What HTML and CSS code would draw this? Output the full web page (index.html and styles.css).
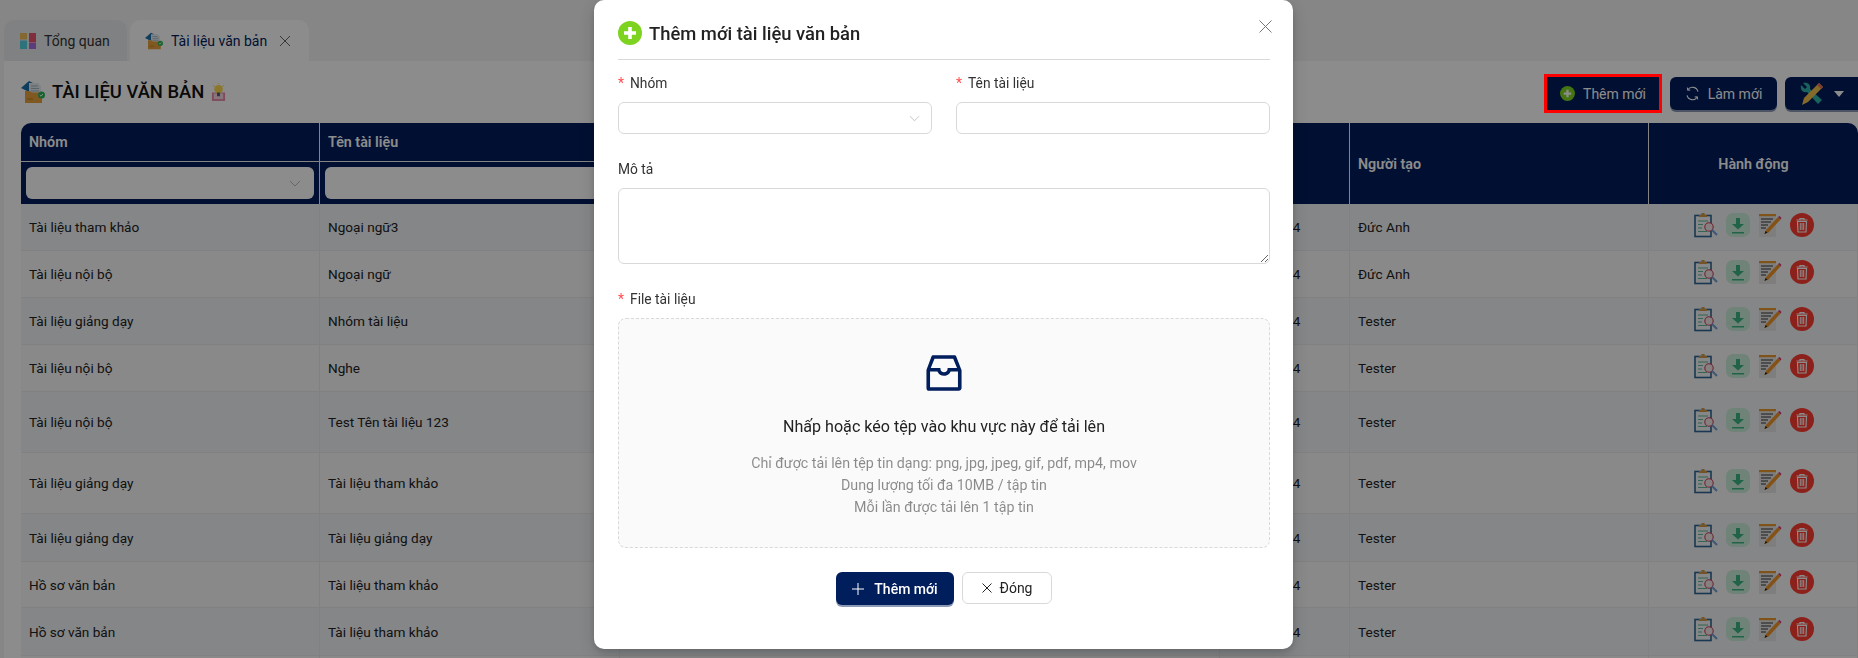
FILE: index.html
```html
<!DOCTYPE html>
<html lang="vi">
<head>
<meta charset="utf-8">
<title>Tài liệu văn bản</title>
<link rel="stylesheet" href="styles.css">
</head>
<body>
<svg class="sprite" aria-hidden="true">
  <symbol id="folder" viewBox="0 0 24 24">
    <path d="M0 8 8 1l4 2v8H6z" fill="#1f6fa8"/>
    <path d="M8 3h9l3 3v9H8z" fill="#e6edf2"/>
    <path d="M10 6h7M10 8.5h8M10 11h8" stroke="#9fb2bf" stroke-width="1"/>
    <path d="M4 11h5l1.500 1.500H21V23H4z" fill="#e8a33d"/>
    <path d="M6 19h6" stroke="#b87b22" stroke-width="1"/>
    <circle cx="20.500" cy="15" r="3.500" fill="#2fb457"/>
    <path d="m18.800 15 1.200 1.200 2-2.200" fill="none" stroke="#fff" stroke-width="1"/>
  </symbol>
  <symbol id="bulb" viewBox="0 0 16 20">
    <path d="M1 10h14v9H1z" fill="#e98aa8"/>
    <path d="M3 11h10v6H3z" fill="#f6d7e0"/>
    <circle cx="8" cy="6.500" r="4.500" fill="#ffd84d"/>
    <path d="M6.500 10h3v4h-3z" fill="#4a5a70"/>
    <path d="M2 2l2 2M14 2l-2 2M8 0v1" stroke="#ffd84d" stroke-width="1"/>
  </symbol>
  <symbol id="plus-circle" viewBox="0 0 24 24">
    <circle cx="12" cy="12" r="12" fill="#7ed321"/>
    <path d="M12 6v12M6 12h12" stroke="#fff" stroke-width="3.600"/>
  </symbol>
  <symbol id="view" viewBox="0 0 24 26">
    <rect x="1" y="3.500" width="16" height="21" fill="#f2f6f8" stroke="#2f6593" stroke-width="1.600"/>
    <path d="M5 5V3h2.500V1h3v2H13v2z" fill="#d39a45"/>
    <path d="M4 9h10M4 12.500h5M4 16h4M4 19.500h9" stroke="#62b892" stroke-width="1.200"/>
    <circle cx="15" cy="15" r="4.200" fill="#f7eaea" stroke="#c8415a" stroke-width="1.100"/>
    <path d="m18 18 5 5" stroke="#6f9fd6" stroke-width="2"/>
  </symbol>
  <symbol id="download" viewBox="0 0 24 24">
    <rect width="24" height="24" rx="7" fill="#cdeedd"/>
    <path d="M10 5h4v6h4l-6 5.500L6 11h4zM6 19h12v1.600H6z" fill="#3bb583"/>
  </symbol>
  <symbol id="edit" viewBox="0 0 24 24">
    <path d="M1 1h17v23H1z" fill="#e6e6e6"/>
    <path d="M1 1h17v2.200H1z" fill="#ea9a2e"/>
    <path d="M3 6h12M3 9h10M3 12h7M3 15h5" stroke="#333" stroke-width="1.200"/>
    <path d="M20 4 22.500 6.500l-12 13-4 1.500L8 17z" fill="#f0952a"/>
    <path d="m20 4 2.500 2.500 1-1.500L21.500 3z" fill="#e0327e"/>
    <path d="m6.500 21 1-3 2 1.500z" fill="#222"/>
  </symbol>
  <symbol id="trash" viewBox="0 0 24 24">
    <circle cx="12" cy="12" r="12" fill="#ff3b30"/>
    <path d="M6.500 7h11M10 7V5.500h4V7" fill="none" stroke="#fff" stroke-width="1.200"/>
    <path d="M7.500 8.500h9L16 19H8z" fill="none" stroke="#fff" stroke-width="1.200"/>
    <path d="M10.300 10v7M12 10v7M13.700 10v7" stroke="#fff" stroke-width="1"/>
  </symbol>
</svg>

<div class="tabs">
  <div class="tab">
    <svg class="tab-icon" viewBox="0 0 16 16" width="16" height="16">
      <rect width="7" height="6.500" fill="#f0bd5b"/>
      <rect x="9" width="7" height="9.500" fill="#ea5272"/>
      <rect y="7.500" width="7" height="8.500" fill="#55cfe0"/>
      <rect x="9" y="10" width="7" height="6" fill="#a76fe0"/>
    </svg>
    <span>Tổng quan</span>
  </div>
  <div class="tab tab-active">
    <svg class="tab-icon-doc" width="18" height="18"><use href="#folder"/></svg>
    <span>Tài liệu văn bản</span>
    <svg class="tab-close" viewBox="0 0 10 10" width="10" height="10"><path d="m0 0 10 10M10 0 0 10" stroke="#666" stroke-width="1"/></svg>
  </div>
</div>

<main class="content">
  <div class="toolbar">
    <h1 class="page-title">
      <svg width="24" height="24"><use href="#folder"/></svg>
      <span>TÀI LIỆU VĂN BẢN</span>
      <svg width="15" height="19"><use href="#bulb"/></svg>
    </h1>
    <div class="actions">
      <button class="btn btn-add">
        <svg width="15" height="15"><use href="#plus-circle"/></svg>
        <span>Thêm mới</span>
        <i class="highlight"></i>
      </button>
      <button class="btn btn-refresh">
        <svg viewBox="0 0 16 16" width="15" height="15" fill="none" stroke="#fff" stroke-width="1.200"><path d="M13.800 6A6 6 0 0 0 3 4M2.200 10A6 6 0 0 0 13 12"/><path d="M2.500 1.800 3 4.500l2.700-.3M13.500 14.200 13 11.500l-2.700.3"/></svg>
        <span>Làm mới</span>
      </button>
      <button class="btn btn-tools">
        <svg viewBox="0 0 24 24" width="24" height="24">
          <path d="M3 1 7 5 5 7 1 3c-1 5 2 8 6 7l11 12 4-4L10 7C11 3 8 0 3 1z" fill="#2fb5a8"/>
          <path d="M19 1 23 5 8 20l-6 3 2-7z" fill="#f2c14e"/>
          <path d="m19 1 4 4-2 2-4-4z" fill="#e8705a"/>
        </svg>
        <svg viewBox="0 0 10 6" width="10" height="6"><path d="M0 0h10L5 6z" fill="#fff"/></svg>
      </button>
    </div>
  </div>

  <table class="grid">
    <colgroup>
      <col class="c-group"><col class="c-name"><col class="c-desc"><col class="c-date"><col class="c-user"><col class="c-act">
    </colgroup>
    <thead>
      <tr class="head-row">
        <th>Nhóm</th>
        <th>Tên tài liệu</th>
        <th>Mô tả</th>
        <th rowspan="2">Ngày tạo</th>
        <th rowspan="2">Người tạo</th>
        <th rowspan="2" class="center">Hành động</th>
      </tr>
      <tr class="filter-row">
        <th><div class="filter"><svg viewBox="0 0 12 7" width="12" height="7" fill="none" stroke="#bbb"><path d="m1 1 5 5 5-5"/></svg></div></th>
        <th><div class="filter"></div></th>
        <th><div class="filter"></div></th>
      </tr>
    </thead>
    <tbody>
      <tr class="h47"><td>Tài liệu tham khảo</td><td>Ngoại ngữ3</td><td></td><td>12/06/2024</td><td>Đức Anh</td><td><div class="row-acts"><svg width="24" height="26"><use href="#view"/></svg><svg width="24" height="24"><use href="#download"/></svg><svg width="24" height="24"><use href="#edit"/></svg><svg width="24" height="24"><use href="#trash"/></svg></div></td></tr>
      <tr class="h47"><td>Tài liệu nội bộ</td><td>Ngoại ngữ</td><td></td><td>12/06/2024</td><td>Đức Anh</td><td><div class="row-acts"><svg width="24" height="26"><use href="#view"/></svg><svg width="24" height="24"><use href="#download"/></svg><svg width="24" height="24"><use href="#edit"/></svg><svg width="24" height="24"><use href="#trash"/></svg></div></td></tr>
      <tr class="h47"><td>Tài liệu giảng dạy</td><td>Nhóm tài liệu</td><td></td><td>12/06/2024</td><td>Tester</td><td><div class="row-acts"><svg width="24" height="26"><use href="#view"/></svg><svg width="24" height="24"><use href="#download"/></svg><svg width="24" height="24"><use href="#edit"/></svg><svg width="24" height="24"><use href="#trash"/></svg></div></td></tr>
      <tr class="h47"><td>Tài liệu nội bộ</td><td>Nghe</td><td></td><td>12/06/2024</td><td>Tester</td><td><div class="row-acts"><svg width="24" height="26"><use href="#view"/></svg><svg width="24" height="24"><use href="#download"/></svg><svg width="24" height="24"><use href="#edit"/></svg><svg width="24" height="24"><use href="#trash"/></svg></div></td></tr>
      <tr class="h61"><td>Tài liệu nội bộ</td><td>Test Tên tài liệu 123</td><td></td><td>12/06/2024</td><td>Tester</td><td><div class="row-acts"><svg width="24" height="26"><use href="#view"/></svg><svg width="24" height="24"><use href="#download"/></svg><svg width="24" height="24"><use href="#edit"/></svg><svg width="24" height="24"><use href="#trash"/></svg></div></td></tr>
      <tr class="h61"><td>Tài liệu giảng dạy</td><td>Tài liệu tham khảo</td><td></td><td>12/06/2024</td><td>Tester</td><td><div class="row-acts"><svg width="24" height="26"><use href="#view"/></svg><svg width="24" height="24"><use href="#download"/></svg><svg width="24" height="24"><use href="#edit"/></svg><svg width="24" height="24"><use href="#trash"/></svg></div></td></tr>
      <tr class="h48"><td>Tài liệu giảng dạy</td><td>Tài liệu giảng dạy</td><td></td><td>12/06/2024</td><td>Tester</td><td><div class="row-acts"><svg width="24" height="26"><use href="#view"/></svg><svg width="24" height="24"><use href="#download"/></svg><svg width="24" height="24"><use href="#edit"/></svg><svg width="24" height="24"><use href="#trash"/></svg></div></td></tr>
      <tr class="h46"><td>Hồ sơ văn bản</td><td>Tài liệu tham khảo</td><td></td><td>12/06/2024</td><td>Tester</td><td><div class="row-acts"><svg width="24" height="26"><use href="#view"/></svg><svg width="24" height="24"><use href="#download"/></svg><svg width="24" height="24"><use href="#edit"/></svg><svg width="24" height="24"><use href="#trash"/></svg></div></td></tr>
      <tr class="h48"><td>Hồ sơ văn bản</td><td>Tài liệu tham khảo</td><td></td><td>12/06/2024</td><td>Tester</td><td><div class="row-acts"><svg width="24" height="26"><use href="#view"/></svg><svg width="24" height="24"><use href="#download"/></svg><svg width="24" height="24"><use href="#edit"/></svg><svg width="24" height="24"><use href="#trash"/></svg></div></td></tr>
      <tr class="h47"><td></td><td></td><td></td><td></td><td></td><td></td></tr>
    </tbody>
  </table>
</main>

<div class="overlay"></div>

<section class="modal">
  <header class="modal-head">
    <svg width="24" height="24"><use href="#plus-circle"/></svg>
    <h2>Thêm mới tài liệu văn bản</h2>
    <svg class="modal-close" viewBox="0 0 13 13" width="13" height="13"><path d="m.5.5 12 12M12.500.5l-12 12" stroke="#777" stroke-width="1"/></svg>
  </header>
  <div class="form-two">
    <div class="field">
      <label class="req">Nhóm</label>
      <div class="select"><svg viewBox="0 0 12 7" width="11" height="7" fill="none" stroke="#bfbfbf"><path d="m1 1 5 5 5-5"/></svg></div>
    </div>
    <div class="field">
      <label class="req">Tên tài liệu</label>
      <input class="input" type="text">
    </div>
  </div>
  <div class="field field-gap">
    <label>Mô tả</label>
    <textarea class="textarea"></textarea>
  </div>
  <div class="field field-gap">
    <label class="req">File tài liệu</label>
    <div class="dropzone">
      <svg viewBox="0 0 1024 1024" width="48" height="48" fill="#001d5c"><path d="M885.2 446.3l-.2-.8-112.2-285.1c-5-16.1-19.900-27.200-36.800-27.200H281.200c-17 0-32.100 11.300-36.900 27.600L139.400 443l-.3.7-.2.8c-1.300 4.900-1.700 9.900-1 14.800-.1 1.600-.2 3.200-.2 4.800V830a60.900 60.900 0 0 0 60.800 60.800h627.200c33.500 0 60.800-27.300 60.900-60.800V464.100c0-1.300 0-2.600-.1-3.700.4-4.900 0-9.600-1.300-14.100zm-295.800-43l-.3 15.700c-.8 44.900-31.800 75.100-77.100 75.100-22.100 0-41.100-7.100-54.800-20.600S436 441.200 435.600 419l-.3-15.700H229.500L309 210h399.200l81.700 193.300H589.400zm-375 76.800h157.300c24.300 57.100 76 90.800 140.400 90.800 33.700 0 65-9.400 90.300-27.200 22.200-15.600 39.500-37.400 50.700-63.600h156.500V814H214.400V480.100z"/></svg>
      <p class="drop-main">Nhấp hoặc kéo tệp vào khu vực này để tải lên</p>
      <div class="drop-hints">
        <p>Chỉ được tải lên tệp tin dạng: png, jpg, jpeg, gif, pdf, mp4, mov</p>
        <p>Dung lượng tối đa 10MB / tập tin</p>
        <p>Mỗi lần được tải lên 1 tập tin</p>
      </div>
    </div>
  </div>
  <footer class="modal-foot">
    <button class="btn btn-submit">
      <svg viewBox="0 0 12 12" width="12" height="12"><path d="M6 0v12M0 6h12" stroke="#fff" stroke-width="1"/></svg>
      <span>Thêm mới</span>
    </button>
    <button class="btn btn-cancel">
      <svg viewBox="0 0 10 10" width="10" height="10"><path d="m.5.5 9 9M9.500.5l-9 9" stroke="#222" stroke-width="1"/></svg>
      <span>Đóng</span>
    </button>
  </footer>
</section>
</body>
</html>
```

FILE: styles.css
```css
* { box-sizing: border-box; }
html, body { height: 658px; overflow: hidden; }
body {
  margin: 0;
  background: #f2f4f2;
  font-family: "Roboto", "Noto Sans", sans-serif;
  font-size: 14px;
  color: rgba(0, 0, 0, 0.88);
}
p, h1, h2 { margin: 0; font-weight: 400; }
.sprite { display: none; }

/* tabs */
.tabs { display: flex; gap: 3px; height: 61px; padding: 20px 0 0 4px; }
.tab {
  display: flex; align-items: center; gap: 8px;
  height: 41px; width: 123px; padding: 0 16px;
  background: #e9ebee; border-radius: 10px 10px 0 0;
  color: #333; font-size: 14px;
}
.tab-active { width: 179px; padding: 0 15px; background: #fff; color: #001d5c; }
.tab-close { margin-left: auto; margin-right: 4px; }

/* page */
.content { margin-left: 4px; padding-left: 17px; background: #fff; height: 597px; overflow: hidden; }
.toolbar { display: flex; justify-content: space-between; align-items: flex-start; height: 62px; padding-top: 16px; }
.page-title { display: flex; align-items: center; gap: 7px; height: 28px; font-size: 18.400px; font-weight: 500; color: #111; }
.page-title svg { margin-top: 2px; }
.actions { display: flex; gap: 8px; }

.btn {
  display: inline-flex; align-items: center; justify-content: center; gap: 8px;
  height: 33px; padding: 0; border: 0; border-radius: 6px;
  font: inherit; font-size: 14px; color: #fff; background: #001d5c;
  box-shadow: 0 2px 0 rgba(0, 29, 92, 0.45);
}
.btn-add { position: relative; width: 112px; gap: 8px; margin-right: 3px; border-radius: 0; box-shadow: none; }
.highlight { position: absolute; inset: -3px; border: 3px solid #ff0000; z-index: 30; }
.btn-refresh { width: 107px; }
.btn-tools { width: 73px; gap: 10px; border-radius: 6px 0 0 6px; }

/* table */
.grid { width: 1837px; table-layout: fixed; border-collapse: separate; border-spacing: 0; }
.c-group { width: 299px; }
.c-name { width: 300px; }
.c-desc { width: 600px; }
.c-date { width: 130px; }
.c-user { width: 299px; }
.c-act { width: 209px; }
.grid th {
  background: #001d5c; color: #fff; font-weight: 600; font-size: 14.300px;
  text-align: left; padding: 0 8px;
  border-right: 1px solid #f0f0f0;
}
.grid th:last-child { border-right: 0; }
.grid th.center { text-align: center; border-radius: 0 10px 0 0; border-right: 0; }
.head-row th:first-child { border-radius: 10px 0 0 0; }
.head-row { height: 39px; }
.head-row th:not([rowspan]) { border-bottom: 1px solid #f0f0f0; }
.filter-row { height: 42px; }
.filter-row th { padding: 0 5px; }
.filter {
  display: flex; align-items: center; justify-content: flex-end;
  height: 32px; padding-right: 13px; background: #fff; border-radius: 6px;
}
.grid td {
  padding: 0 8px; font-size: 13.600px; color: #222;
  border-bottom: 1px solid #ececec; border-right: 1px solid #ececec;
  vertical-align: middle;
}
.grid tbody tr:nth-child(odd) td { background: #f1f4f8; }
.grid tbody tr:nth-child(even) td { background: #f9f9f9; }
.h47 { height: 47px; }
.h46 { height: 46px; }
.h48 { height: 48px; }
.h61 { height: 61px; }
.row-acts { display: flex; justify-content: center; align-items: center; gap: 8px; margin: -5px 0 0 2px; }

/* overlay + modal */
.overlay { position: fixed; inset: 0; background: rgba(0, 0, 0, 0.45); z-index: 10; }
.modal {
  position: absolute; left: 594px; top: 0; z-index: 20;
  width: 699px; height: 649px; padding: 0 23px 0 24px;
  background: #fff; border-radius: 10px;
  box-shadow: 0 6px 16px rgba(0, 0, 0, 0.15), 0 3px 6px rgba(0, 0, 0, 0.12);
}
.modal-head { position: relative; display: flex; align-items: center; gap: 7px; height: 60px; padding-top: 7px; border-bottom: 1px solid #d9d9d9; }
.modal-head h2 { font-size: 18.400px; font-weight: 500; color: #222; }
.modal-close { position: absolute; right: -2px; top: 20px; }

.form-two { display: grid; grid-template-columns: 314px 314px; column-gap: 24px; margin-top: 12px; }
.field { display: flex; flex-direction: column; }
.field-gap { margin-top: 24px; }
.field label { height: 22px; line-height: 22px; margin-bottom: 8px; font-size: 13.800px; color: #333; }
.req::before { content: "*"; color: #ff4d4f; margin-right: 6px; font-size: 14px; }

.select, .input, .textarea { border: 1px solid #d9d9d9; border-radius: 6px; background: #fff; }
.select { display: flex; align-items: center; justify-content: flex-end; height: 32px; padding-right: 11px; }
.input { height: 32px; width: 100%; }
.textarea { display: block; height: 76px; width: 100%; resize: vertical; }

.dropzone {
  display: flex; flex-direction: column; align-items: center;
  height: 230px; padding-top: 30px;
  background: #fafafa; border: 1px dashed #d9d9d9; border-radius: 8px;
}
.drop-main { margin-top: 18px; font-size: 16.100px; line-height: 24px; color: #222; }
.drop-hints { margin-top: 13px; font-size: 14.240px; line-height: 22px; color: rgba(0, 0, 0, 0.45); text-align: center; }

.modal-foot { display: flex; justify-content: center; gap: 8px; margin-top: 24px; }
.btn-submit { width: 118px; gap: 10px; font-weight: 500; }
.btn-cancel { width: 90px; height: 32px; background: #fff; color: #222; border: 1px solid #d9d9d9; box-shadow: none; }
```
